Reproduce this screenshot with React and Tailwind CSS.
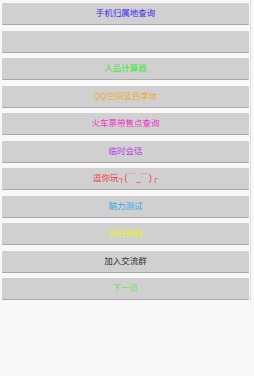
const items = [
  { label: "手机归属地查询", color: "text-[#3a2cf0]" },
  { label: "", color: "" },
  { label: "人品计算器", color: "text-[#3ce63c]" },
  { label: "QQ空间蓝色字体", color: "text-[#f0a830]" },
  { label: "火车票带售点查询", color: "text-[#f030c8]" },
  { label: "临时会话", color: "text-[#b838e8]" },
  { label: "逗你玩┐(￣_￣)┌", color: "text-[#f03840]" },
  { label: "脑力测试", color: "text-[#30a8e8]" },
  { label: "表白神器", color: "text-[#e8f020]" },
  { label: "加入交流群", color: "text-[#333333]" },
  { label: "下一页", color: "text-[#60e060]" },
];

export default function App() {
  return (
    <div
      className="relative h-[376px] w-[254px] bg-[#f8f8f8]"
      style={{ fontFamily: '"Liberation Sans", "Noto Sans CJK SC", sans-serif' }}
    >
      <div className="flex flex-col gap-[5.5px] pl-[2px] pr-[5px] pt-[3px]">
        {items.map((item, i) => (
          <button
            key={i}
            type="button"
            className={`flex h-[22px] w-full items-center justify-center rounded-[1px] border-b border-[#a9a9a9] bg-[#d0d0d0] text-[8.5px] leading-none ${item.color}`}
          >
            {item.label}
          </button>
        ))}
      </div>
      <div className="absolute right-[3px] top-0 h-[300px] w-px bg-[#dcdcdc]" />
    </div>
  );
}
